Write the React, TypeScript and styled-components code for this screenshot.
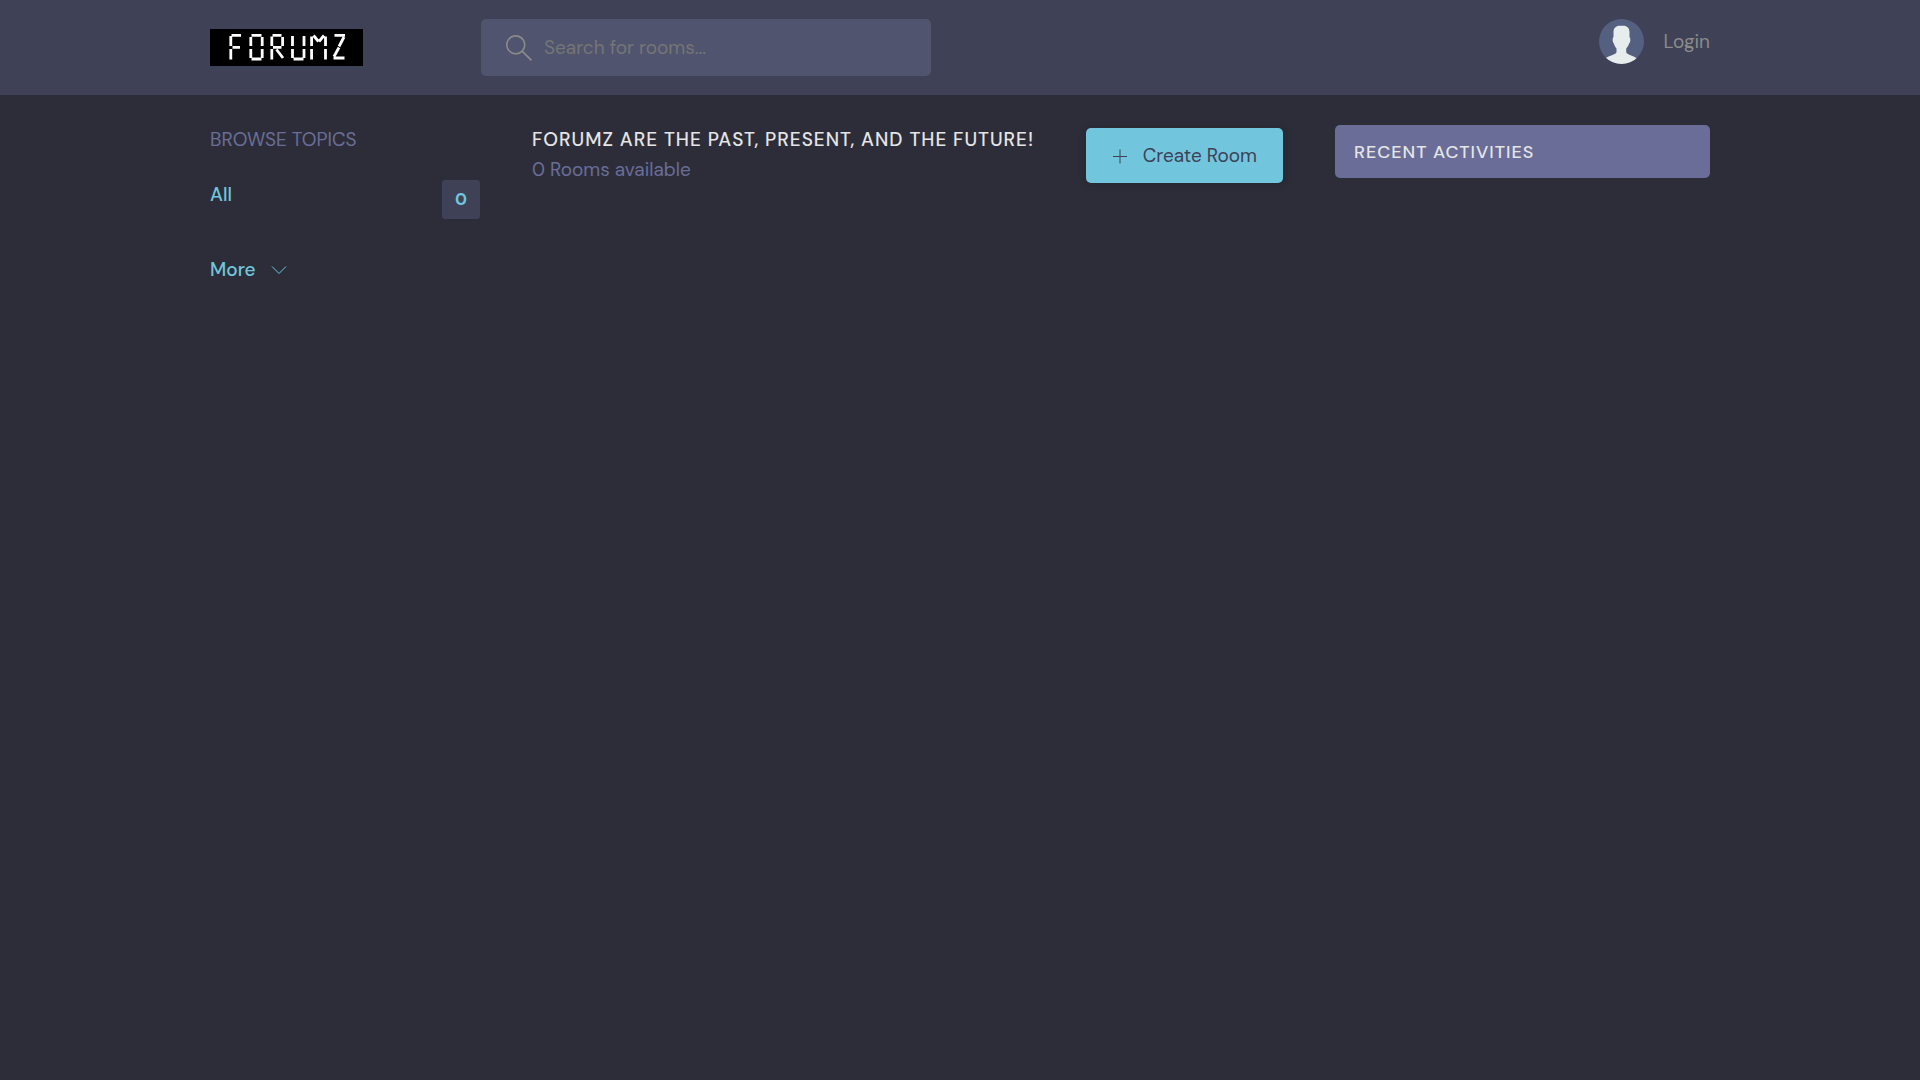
import React from "react";
import styled, { createGlobalStyle } from "styled-components";

const color = {
  main: "#71c6dd",
  dark: "#3f4156",
  medium: "#51546e",
  soft: "#696d97",
  light: "#e5e5e5",
  gray: "#8b8b8b",
  bg: "#2d2d39",
};

const GlobalStyle = createGlobalStyle`
  *, *::before, *::after { box-sizing: border-box; margin: 0; padding: 0; }
  body {
    background: ${color.bg};
    color: ${color.light};
    font-family: "DM Sans", Inter, "Liberation Sans", sans-serif;
    font-size: 19px;
    line-height: 30px;
  }
  a { color: inherit; text-decoration: none; }
`;

const Header = styled.header`
  background: ${color.dark};
`;

const Container = styled.div`
  width: 90%;
  max-width: 1500px;
  margin: 0 auto;
`;

const HeaderBar = styled(Container)`
  display: flex;
  align-items: flex-start;
  padding: 19px 0;
`;

const LogoLink = styled.a`
  display: flex;
  align-self: center;
  margin-right: 118px;
`;

const SearchForm = styled.form`
  display: flex;
  align-items: center;
  gap: 12px;
  width: 450px;
  height: 57px;
  padding: 0 25px;
  border-radius: 5px;
  background: ${color.medium};
  color: ${color.gray};

  svg { flex: none; }
`;

const SearchInput = styled.input`
  flex: 1;
  min-width: 0;
  border: 0;
  outline: 0;
  background: transparent;
  color: ${color.light};
  font: inherit;

  &::placeholder { color: #757575; opacity: 1; }
`;

const LoginLink = styled.a`
  display: flex;
  align-items: center;
  gap: 19px;
  margin-left: auto;
  color: ${color.gray};
  line-height: 28px;
`;

const Layout = styled(Container)`
  display: grid;
  grid-template-columns: 270fr 751fr 375fr;
  column-gap: 52px;
  align-items: start;
  padding-top: 30px;
`;

const TopicsTitle = styled.h2`
  color: ${color.soft};
  font-size: 19px;
  font-weight: 400;
  text-transform: uppercase;
`;

const TopicList = styled.ul`
  list-style: none;
  margin-top: 25px;
`;

const TopicLink = styled.a`
  display: flex;
  justify-content: space-between;
  align-items: flex-start;
  color: ${color.main};
  font-weight: 500;
`;

const Count = styled.span`
  padding: 4px 13px 5px;
  border-radius: 3px;
  background: ${color.dark};
  font-size: 17px;
  font-weight: 700;
`;

const MoreLink = styled.a`
  display: inline-flex;
  align-items: center;
  gap: 15px;
  margin-top: 36px;
  color: ${color.main};
  font-weight: 500;
`;

const RoomsHeader = styled.div`
  display: flex;
  justify-content: space-between;
  align-items: flex-start;
`;

const RoomsTitle = styled.h1`
  font-size: 19px;
  font-weight: 500;
  letter-spacing: 1px;
  text-transform: uppercase;
`;

const RoomsCount = styled.p`
  color: ${color.soft};
`;

const CreateLink = styled.a`
  display: inline-flex;
  flex: none;
  align-items: center;
  gap: 15px;
  height: 55px;
  margin-top: 3px;
  padding: 0 26px;
  border-radius: 5px;
  background: ${color.main};
  box-shadow: 1px 1px 6px 3px rgba(0, 0, 0, 0.1);
  color: ${color.dark};
`;

const ActivitiesTitle = styled.h2`
  padding: 12px 19px 11px;
  border-radius: 5px;
  background: ${color.soft};
  font-size: 18px;
  font-weight: 500;
  letter-spacing: 1px;
  text-transform: uppercase;
`;

function Logo() {
  return (
    <svg width="153" height="37" viewBox="0 0 153 37" role="img" aria-label="Forumz">
      <rect width="153" height="37" fill="#000" />
      <g stroke="#fff" strokeWidth="2.8">
        <path d="M21.500 6.400h9.500M22.500 18.300h7.500M20.800 7v10M20.800 20v10.500" />
        <path d="M41.500 6.400h10M41.500 30h10M40.800 8v9M40.800 20v9M52.200 8v9M52.200 20v9" />
        <path d="M62.500 6.400h9M63 18.300h8.500M61.800 7.500v9.500M61.800 20v10.500M72.600 8v9M66.500 20.500l6.500 8.500" />
        <path d="M83.500 30h10M82.500 7v10M82.500 20v9M94 7v10M94 20v9" />
        <path d="M101.600 7.500v9.500M101.600 20v10.500M115.500 7.500v9.500M115.500 20v10.500M103.500 6.500l5 6M114 6.500l-5 6" />
        <path d="M124.500 6.400h10.500M123.500 29h11M134 8l-5 9.500M129 18.500l-5 9" />
      </g>
    </svg>
  );
}

function Avatar() {
  return (
    <svg width="45" height="45" viewBox="0 0 45 45" aria-hidden="true">
      <defs>
        <clipPath id="avatar-circle"><circle cx="22.500" cy="22.500" r="22.500" /></clipPath>
      </defs>
      <g clipPath="url(#avatar-circle)">
        <rect width="45" height="45" fill="#556080" />
        <path
          fill="#e7eced"
          d="M14.500 13c0-4 2.500-6.300 6-6.300h4c3.500 0 6 2.300 6 6.300v5c1.300 1 1 5.500-.3 6.500-.7 2-1.700 3.700-3 5v3.500c0 2.500 8 3.500 11 7V46H6v-6c3-3.500 11.500-4.500 11.500-7v-3.500c-1.200-1.300-2-3-2.700-5-1.300-1-1.600-5.500-.3-6.500z"
        />
      </g>
    </svg>
  );
}

const SearchIcon = () => (
  <svg width="26" height="26" viewBox="0 0 32 32" fill="currentColor" aria-hidden="true">
    <path d="M32 30.586l-10.845-10.845c1.771-2.092 2.845-4.791 2.845-7.741 0-6.617-5.383-12-12-12s-12 5.383-12 12c0 6.617 5.383 12 12 12 2.950 0 5.649-1.074 7.741-2.845l10.845 10.845 1.414-1.414zM12 22c-5.514 0-10-4.486-10-10s4.486-10 10-10c5.514 0 10 4.486 10 10s-4.486 10-10 10z" />
  </svg>
);

const ChevronIcon = () => (
  <svg width="16" height="16" viewBox="0 0 16 16" fill="none" stroke="currentColor" aria-hidden="true">
    <path d="M1 4.500l7 7 7-7" />
  </svg>
);

const PlusIcon = () => (
  <svg width="16" height="16" viewBox="0 0 16 16" fill="none" stroke="currentColor" aria-hidden="true">
    <path d="M1 8.500h14M8 1.500v14" />
  </svg>
);

export default function App() {
  return (
    <>
      <GlobalStyle />
      <Header>
        <HeaderBar>
          <LogoLink href="#home"><Logo /></LogoLink>
          <SearchForm role="search">
            <SearchIcon />
            <SearchInput type="text" aria-label="Search for rooms" placeholder="Search for rooms..." />
          </SearchForm>
          <LoginLink href="#login">
            <Avatar />
            Login
          </LoginLink>
        </HeaderBar>
      </Header>
      <Layout as="main">
        <nav>
          <TopicsTitle>Browse Topics</TopicsTitle>
          <TopicList>
            <li>
              <TopicLink href="#all">All <Count>0</Count></TopicLink>
            </li>
          </TopicList>
          <MoreLink href="#topics">More <ChevronIcon /></MoreLink>
        </nav>
        <section>
          <RoomsHeader>
            <div>
              <RoomsTitle>Forumz are the past, present, and the future!</RoomsTitle>
              <RoomsCount>0 Rooms available</RoomsCount>
            </div>
            <CreateLink href="#create-room"><PlusIcon />Create Room</CreateLink>
          </RoomsHeader>
        </section>
        <aside>
          <ActivitiesTitle>Recent Activities</ActivitiesTitle>
        </aside>
      </Layout>
    </>
  );
}
